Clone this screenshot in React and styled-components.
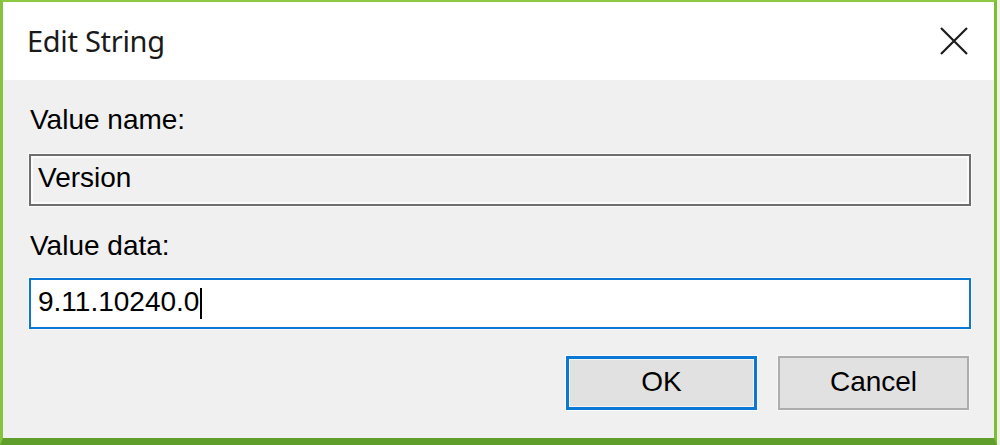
import React from 'react';
import styled, { createGlobalStyle } from 'styled-components';

const GlobalStyle = createGlobalStyle`
  html, body {
    margin: 0;
    padding: 0;
    background: #eef4e4;
  }
  #root {
    width: 1000px;
    height: 445px;
    overflow: hidden;
  }
`;

const Window = styled.div`
  box-sizing: border-box;
  width: 997px;
  height: 445px;
  display: flex;
  flex-direction: column;
  border-left: 3px solid #84c43c;
  border-top: 2px solid #8cc940;
  border-right: 3px solid #7dbd33;
  border-bottom: 7px solid #5f9e2a;
  background: #f0f0f0;
`;

const TitleBar = styled.div`
  height: 78px;
  flex: none;
  display: flex;
  align-items: center;
  justify-content: space-between;
  padding: 0 24px 0 24px;
  background: #ffffff;
`;

const Title = styled.div`
  font-family: "Noto Sans", "Open Sans", sans-serif;
  font-size: 29px;
  color: #1a1a1a;
  letter-spacing: -0.3px;
  margin-top: -1px;
`;

const CloseButton = styled.div`
  width: 28px;
  height: 28px;
  margin-right: 2px;
  display: flex;
  align-items: center;
  justify-content: center;
`;

const Body = styled.div`
  flex: 1;
  display: flex;
  flex-direction: column;
  padding: 0 23px 0 26px;
  font-family: "Liberation Sans", Arial, sans-serif;
  font-size: 28px;
  color: #000;
`;

const Label = styled.div`
  line-height: 30px;
  margin-top: ${p => p.$gap}px;
  margin-left: 1px;
`;

const Field = styled.div`
  box-sizing: border-box;
  height: ${p => p.$height}px;
  margin-top: ${p => p.$gap}px;
  display: flex;
  align-items: center;
  padding: 0 0 4px 7px;
  line-height: 30px;
  background: ${p => (p.$focused ? '#ffffff' : '#f0f0f0')};
  border: ${p => (p.$focused ? '2px solid #0a78d4' : '2px solid #6e6e6e')};
  box-shadow: ${p =>
    p.$focused
      ? '0 0 0 1px #fafafa'
      : 'inset 0 0 0 2px #fbfbfb, 0 0 0 1px #fafafa'};
`;

const Caret = styled.span`
  display: inline-block;
  width: 2px;
  height: 31px;
  margin-left: 1px;
  background: #000;
  align-self: center;
  margin-bottom: -3px;
`;

const ButtonRow = styled.div`
  display: flex;
  justify-content: flex-end;
  gap: 21px;
  margin-top: 27px;
  padding-right: 2px;
`;

const Button = styled.div`
  box-sizing: border-box;
  width: 191px;
  height: 54px;
  display: flex;
  align-items: center;
  justify-content: center;
  padding-bottom: 3px;
  background: #e1e1e1;
  border: ${p => (p.$primary ? '3px solid #0a78d4' : '2px solid #adadad')};
  box-shadow: ${p =>
    p.$primary ? 'inset 0 0 0 1px #f4f4f4, 0 0 0 1px #fbfbfb' : '0 0 0 1px #f6f6f6'};
  line-height: 30px;
`;

const CloseIcon = () => (
  <svg width="28" height="28" viewBox="0 0 28 28">
    <path d="M1 1 L27 27 M27 1 L1 27" stroke="#1c1c1c" strokeWidth="2.2" fill="none" />
  </svg>
);

const App = () => {
  return (
    <>
      <GlobalStyle />
      <Window>
        <TitleBar>
          <Title>Edit String</Title>
          <CloseButton>
            <CloseIcon />
          </CloseButton>
        </TitleBar>
        <Body>
          <Label $gap={25}>Value name:</Label>
          <Field $gap={19} $height={52}>Version</Field>
          <Label $gap={25}>Value data:</Label>
          <Field $gap={17} $height={51} $focused>
            9.11.10240.0<Caret />
          </Field>
          <ButtonRow>
            <Button $primary>OK</Button>
            <Button>Cancel</Button>
          </ButtonRow>
        </Body>
      </Window>
    </>
  );
};

export default App;
